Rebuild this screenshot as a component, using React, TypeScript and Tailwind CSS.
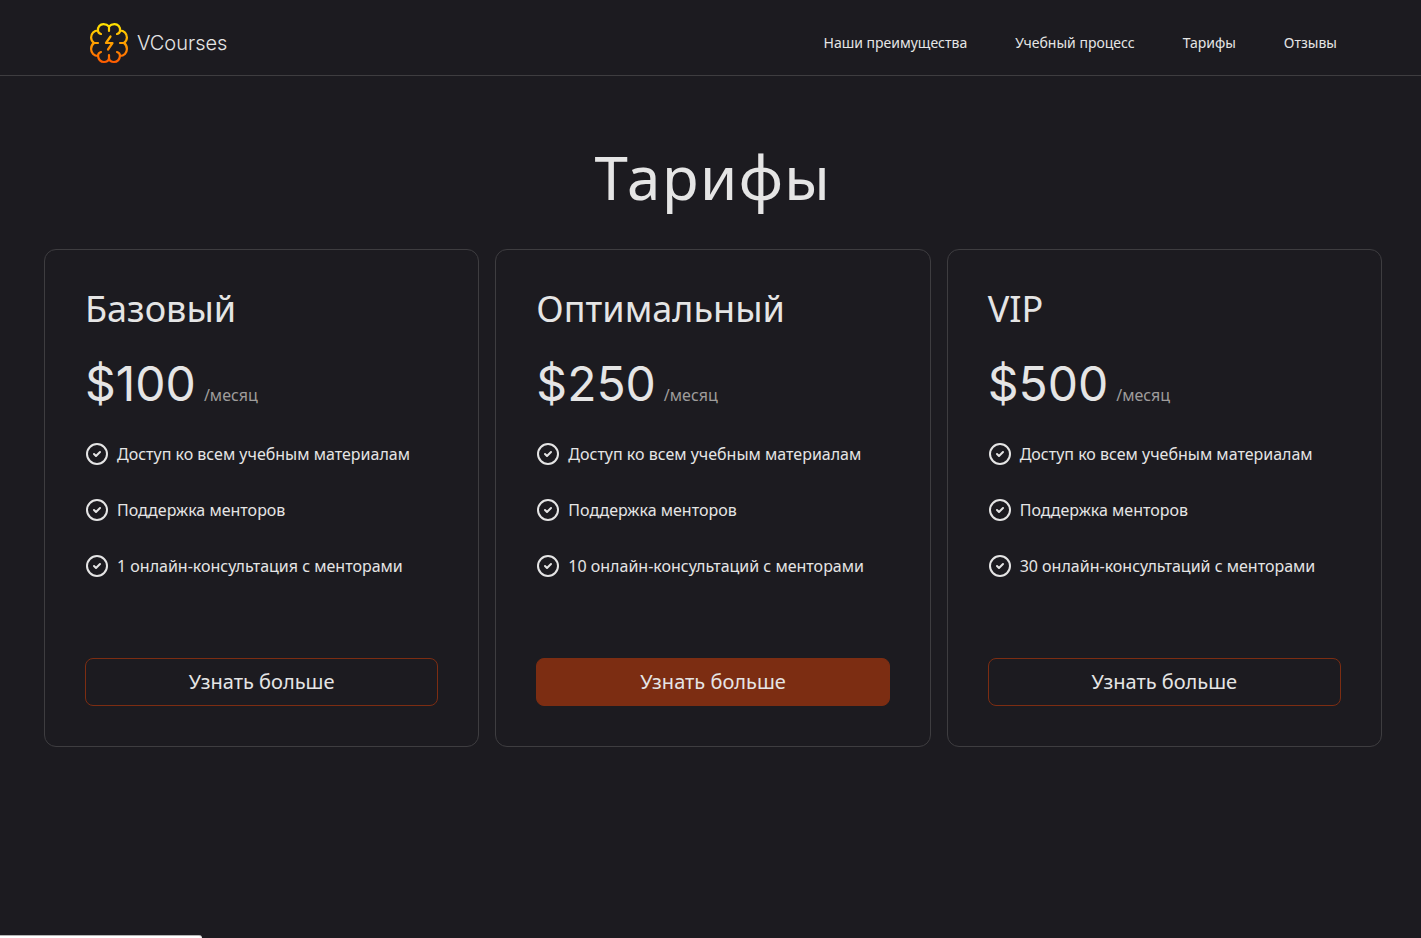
import React from 'react';
import { CircleCheck } from 'lucide-react';

interface Plan {
  name: string;
  price: string;
  features: string[];
  highlighted?: boolean;
}

const NAV_LINKS = [
  { label: 'Наши преимущества', href: '#benefits' },
  { label: 'Учебный процесс', href: '#process' },
  { label: 'Тарифы', href: '#pricing' },
  { label: 'Отзывы', href: '#reviews' },
];

const PLANS: Plan[] = [
  {
    name: 'Базовый',
    price: '$100',
    features: ['Доступ ко всем учебным материалам', 'Поддержка менторов', '1 онлайн-консультация с менторами'],
  },
  {
    name: 'Оптимальный',
    price: '$250',
    features: ['Доступ ко всем учебным материалам', 'Поддержка менторов', '10 онлайн-консультаций с менторами'],
    highlighted: true,
  },
  {
    name: 'VIP',
    price: '$500',
    features: ['Доступ ко всем учебным материалам', 'Поддержка менторов', '30 онлайн-консультаций с менторами'],
  },
];

function Logo() {
  return (
    <svg viewBox="0 0 40 42" className="w-10 h-[42px]" fill="none" aria-hidden="true">
      <defs>
        <linearGradient id="brain" x1="20" y1="1" x2="20" y2="41" gradientUnits="userSpaceOnUse">
          <stop stopColor="#ffe600" />
          <stop offset="1" stopColor="#ff5a00" />
        </linearGradient>
      </defs>
      <g stroke="url(#brain)" strokeWidth="2.2" strokeLinecap="round" strokeLinejoin="round">
        <path d="M20 9V4.500C18.500 2.700 16.500 2.100 14.500 2.100C11 2.100 8.500 5 9 8.500C5 8.500 2.100 11.500 2.100 15.500C2.100 17.500 3 19.500 5 21C3 22.500 2.100 24.500 2.100 27C2.100 31 5 34 9 34C9.500 37.500 11.500 40 15 40C17.500 40 19.500 38.500 20 36.500V33" />
        <path d="M20 4.500C21.500 2.700 23.500 2.100 25.500 2.100C29 2.100 31.500 5 31 8.500C35 8.500 37.900 11.500 37.900 15.500C37.900 17.500 37 19.500 35 21C37 22.500 37.900 24.500 37.900 27C37.900 31 35 34 31 34C30.500 37.500 28.500 40 25 40C22.500 40 20.500 38.500 20 36.500" />
        <path d="M9 8.500C9 10.500 10 11.500 12 12M31 8.500C31 10.500 30 11.500 28 12M5 21H9M35 21H31M9 34C9 32 10 30.500 12 30M31 34C31 32 30 30.500 28 30" />
        <path d="M21.500 14.500L17 21H23.500L19 27.500" />
      </g>
    </svg>
  );
}

function Navbar() {
  return (
    <header className="border-b border-[#3e3d40]">
      <div className="h-[75px] pl-[89px] pr-[84px] pt-[10px] flex items-center justify-between">
        <a href="#top" className="flex items-center gap-2">
          <Logo />
          <span className="font-['Inter','Noto_Sans',sans-serif] font-light text-xl leading-7">VCourses</span>
        </a>
        <nav className="flex gap-12 text-sm">
          {NAV_LINKS.map((link) => (
            <a key={link.href} href={link.href} className="hover:text-white">
              {link.label}
            </a>
          ))}
        </nav>
      </div>
    </header>
  );
}

function PlanCard({ plan }: { plan: Plan }) {
  return (
    <article className="border border-[#3e3d40] rounded-xl p-10">
      <h2 className="text-4xl leading-[38px]">{plan.name}</h2>
      <p className="mt-7 mb-[30px] flex items-baseline gap-2">
        <span className="font-['Inter','Noto_Sans',sans-serif] text-5xl leading-[56px]">{plan.price}</span>
        <span className="text-[#9f9d9c]">/месяц</span>
      </p>
      <ul className="space-y-8">
        {plan.features.map((feature) => (
          <li key={feature} className="flex items-center gap-2">
            <CircleCheck className="w-6 h-6 shrink-0" />
            <span>{feature}</span>
          </li>
        ))}
      </ul>
      <button
        type="button"
        className={`mt-20 w-full h-12 rounded-lg border border-[#7c2d12] text-xl cursor-pointer transition-colors hover:bg-[#7c2d12] ${
          plan.highlighted ? 'bg-[#7c2d12]' : 'bg-transparent'
        }`}
      >
        Узнать больше
      </button>
    </article>
  );
}

export default function App() {
  return (
    <div className="min-h-screen bg-[#1c1b20] text-[#e5e5e5] font-['Noto_Sans',sans-serif]">
      <Navbar />
      <main id="pricing" className="pl-11 pr-[39px] pt-16">
        <h1 className="text-center text-6xl leading-[74px] tracking-wide">Тарифы</h1>
        <section className="mt-[35px] grid grid-cols-3 gap-4">
          {PLANS.map((plan) => (
            <PlanCard key={plan.name} plan={plan} />
          ))}
        </section>
      </main>
      {/* Browser status strip */}
      <div className="fixed left-0 bottom-0 w-[202px] h-[3px] bg-white border-t border-[#b5b5b5] rounded-tr" />
    </div>
  );
}
